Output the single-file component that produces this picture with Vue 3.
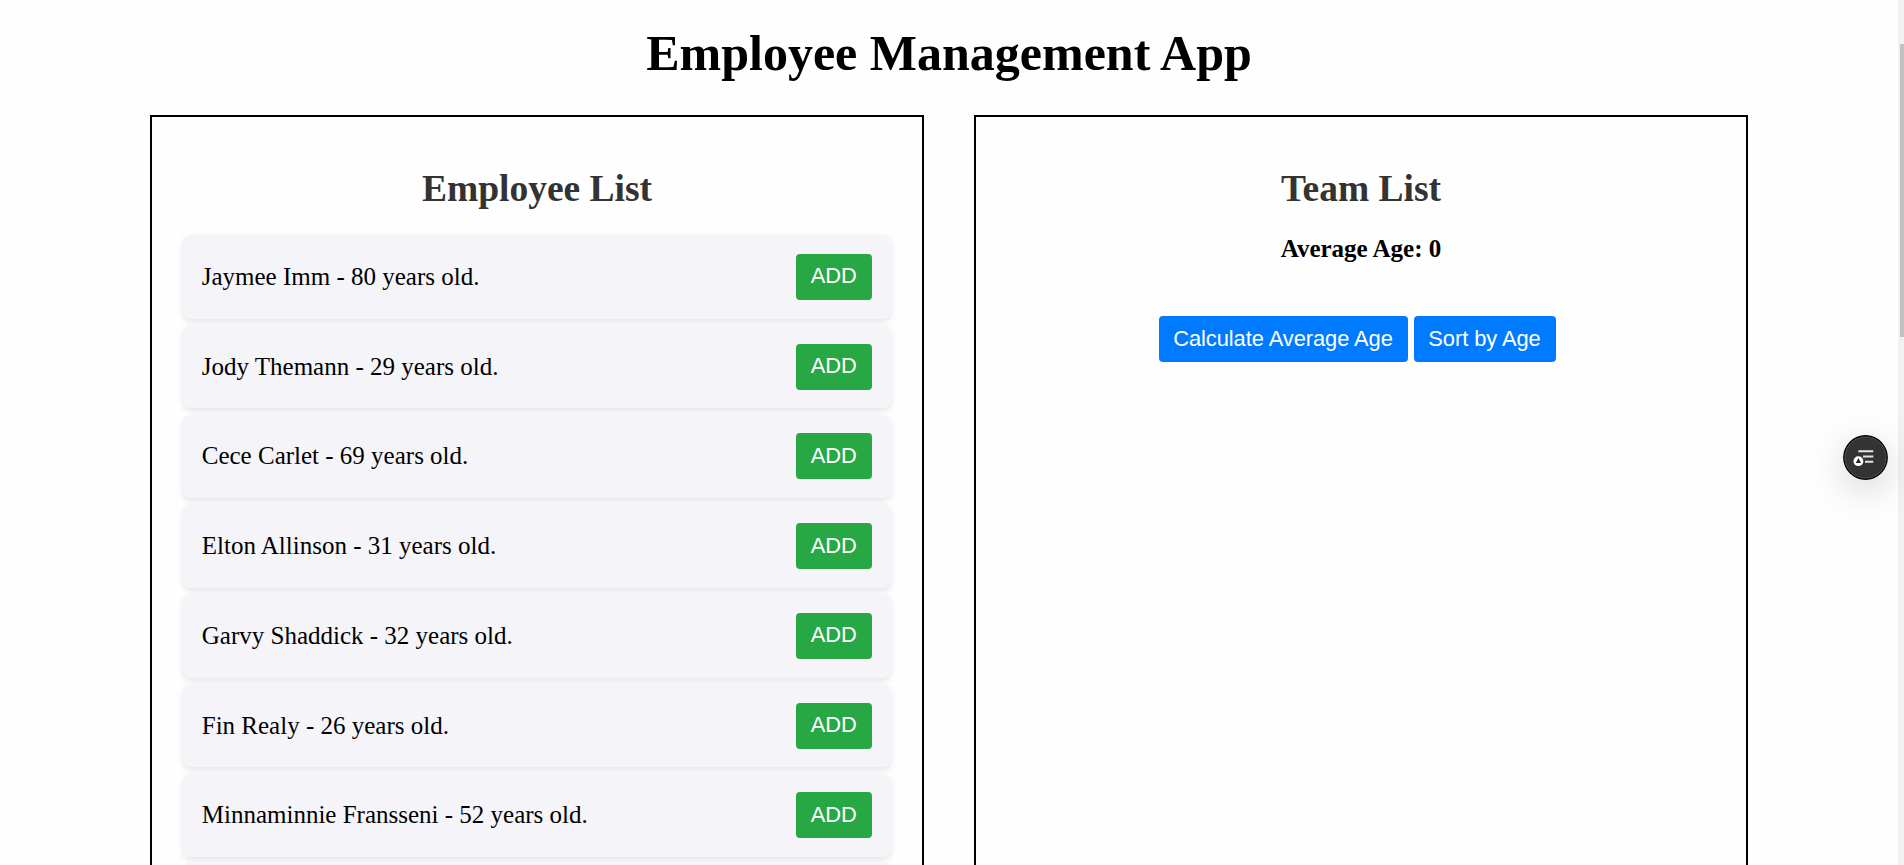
<script setup>
const employees = [
  { name: 'Jaymee Imm', age: 80 },
  { name: 'Jody Themann', age: 29 },
  { name: 'Cece Carlet', age: 69 },
  { name: 'Elton Allinson', age: 31 },
  { name: 'Garvy Shaddick', age: 32 },
  { name: 'Fin Realy', age: 26 },
  { name: 'Minnaminnie Fransseni', age: 52 },
]
</script>

<template>
  <div class="page">
    <main class="content">
      <h1>Employee Management App</h1>
      <div class="columns">
        <section class="panel">
          <h2>Employee List</h2>
          <ul class="list">
            <li v-for="e in employees" :key="e.name" class="row">
              <span>{{ e.name }} - {{ e.age }} years old.</span>
              <button class="btn add">ADD</button>
            </li>
            <li class="row"></li>
          </ul>
        </section>
        <section class="panel">
          <h2>Team List</h2>
          <p class="average">Average Age: 0</p>
          <div class="actions">
            <button class="btn calc">Calculate Average Age</button>
            <button class="btn sort">Sort by Age</button>
          </div>
        </section>
      </div>
    </main>
    <div class="track"><div class="thumb"></div></div>
    <div class="fab">
      <svg width="45" height="45" viewBox="0 0 45 45">
        <circle cx="22.5" cy="22.5" r="22.4" fill="#000" />
        <circle cx="22.5" cy="22.5" r="20.6" fill="#333" stroke="#555" stroke-width="1" />
        <path d="M15.3 16.3H30.3M20 21.5H30.3M22 26.8H30.3" stroke="#dfe6e6" stroke-width="2" fill="none" />
        <circle cx="15.4" cy="26.2" r="4.9" fill="#fff" />
        <path d="M15.4 23L18 28H12.8Z" fill="#222" />
      </svg>
    </div>
  </div>
</template>

<style scoped>
.page {
  position: relative;
  display: flex;
  height: 865px;
  overflow: hidden;
  background: #fefefe;
  color: #000;
  font: 25px/29px "Liberation Serif", "Times New Roman", serif;
}
.content {
  flex: 1;
}
h1 {
  margin: 25px 0 33px;
  font-size: 50px;
  line-height: 57px;
  text-align: center;
}
.columns {
  display: flex;
  justify-content: center;
  gap: 50px;
}
.panel {
  box-sizing: border-box;
  width: 774px;
  height: 900px;
  padding: 31px;
  border: 2px solid #000;
}
h2 {
  margin: 19px 0 25px;
  color: #333;
  font-size: 37.5px;
  line-height: 43px;
  text-align: center;
}
.list {
  display: flex;
  flex-direction: column;
  gap: 6.25px;
  margin: 0;
  padding: 0;
  list-style: none;
}
.row {
  display: flex;
  box-sizing: border-box;
  flex: none;
  align-items: center;
  justify-content: space-between;
  height: 83.5px;
  padding: 0 18.75px;
  border-radius: 7.8px;
  background: #f4f4f9;
  box-shadow: 0 3px 6px rgba(0, 0, 0, 0.1);
}
.row span {
  margin-bottom: 1px;
}
.btn {
  flex: none;
  height: 46px;
  padding: 0 0 1px;
  border: 0;
  border-radius: 4px;
  color: #fff;
  font: 21.875px "Liberation Sans", Arial, sans-serif;
  letter-spacing: -0.06px;
}
.add {
  width: 76px;
  padding-right: 1px;
  background: #28a745;
}
.average {
  margin: -1px 0 0;
  font-weight: bold;
  text-align: center;
}
.actions {
  display: flex;
  justify-content: center;
  gap: 6px;
  margin: 53px 8px 0 0;
}
.calc {
  width: 249px;
  background: #007bff;
}
.sort {
  width: 142px;
  background: #007bff;
}
.track {
  box-sizing: border-box;
  width: 6px;
  padding: 44px 0 0 2px;
  background: #f1f1f1;
}
.thumb {
  height: 293px;
  background: #c1c1c1;
}
.fab {
  position: absolute;
  top: 435px;
  left: 1843px;
  width: 45px;
  height: 45px;
  border-radius: 50%;
  box-shadow: 0 10px 36px rgba(0, 0, 0, 0.17);
}
.fab svg {
  display: block;
}
</style>
